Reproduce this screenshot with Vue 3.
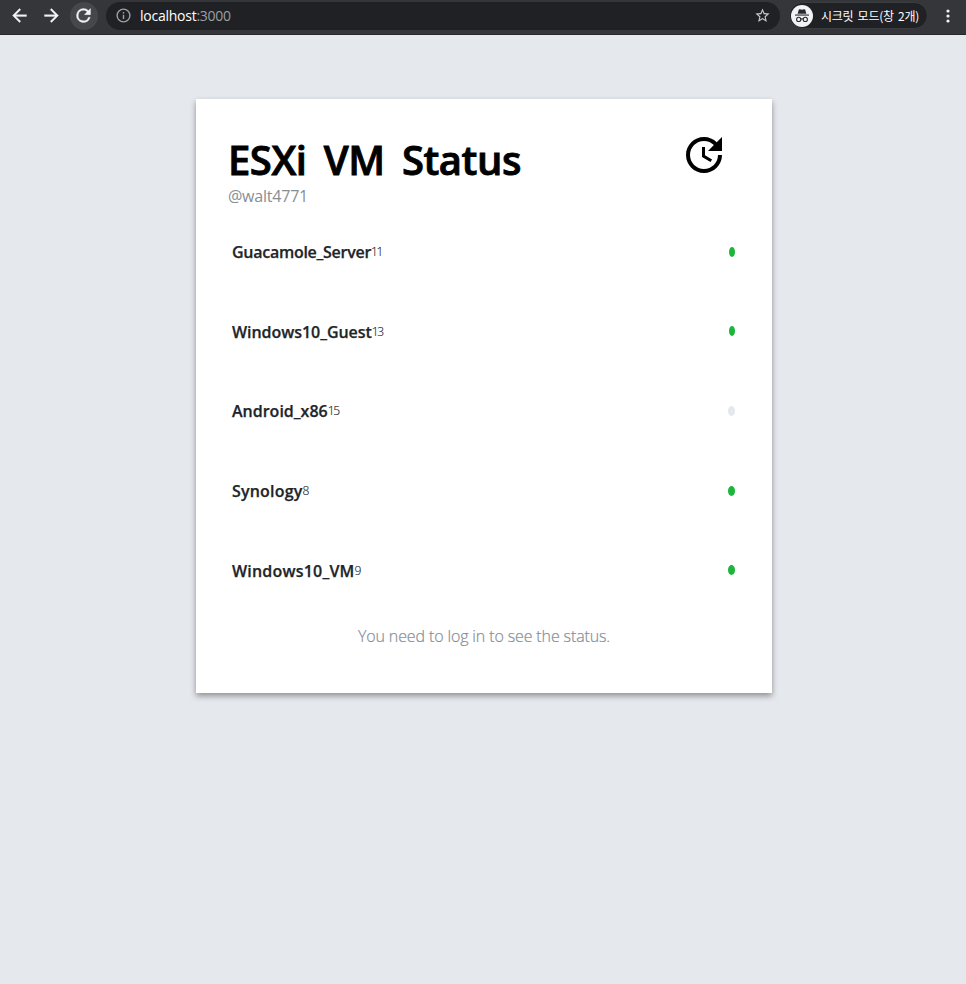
<script setup>
const machines = [
  { name: 'Guacamole_Server', id: 11, on: true, fit: 'tight' },
  { name: 'Windows10_Guest', id: 13, on: true, fit: 'snug', raised: true },
  { name: 'Android_x86', id: 15, on: false, wide: true },
  { name: 'Synology', id: 8, on: true, wide: true, fit: 'loose' },
  { name: 'Windows10_VM', id: 9, on: true, wide: true, fit: 'loose', raised: true },
]
</script>

<template>
  <div class="window">
    <header class="toolbar">
      <span class="nav back">
        <svg viewBox="0 0 24 24" width="21" height="21"><path d="M20 11H7.83l5.59-5.59L12 4l-8 8 8 8 1.41-1.41L7.83 13H20v-2z" /></svg>
      </span>
      <span class="nav forward">
        <svg viewBox="0 0 24 24" width="21" height="21"><path d="M12 4l-1.41 1.41L16.17 11H4v2h12.17l-5.58 5.59L12 20l8-8z" /></svg>
      </span>
      <span class="nav reload">
        <svg viewBox="0 0 24 24" width="21" height="21"><path d="M17.65 6.35A7.96 7.96 0 0 0 12 4a8 8 0 1 0 7.73 10h-2.08A6 6 0 1 1 12 6c1.66 0 3.14.69 4.22 1.78L13 11h7V4l-2.35 2.35z" /></svg>
      </span>
      <div class="address">
        <svg class="info" viewBox="0 0 24 24" width="17" height="17"><path d="M11 7h2v2h-2zm0 4h2v6h-2zm1-9a10 10 0 1 0 0 20 10 10 0 0 0 0-20zm0 18a8 8 0 1 1 0-16 8 8 0 0 1 0 16z" /></svg>
        <span class="url">localhost<span class="port">:3000</span></span>
        <svg class="star" viewBox="0 0 24 24" width="17" height="17"><path d="M22 9.24l-7.19-.62L12 2 9.19 8.63 2 9.24l5.46 4.73L5.82 21 12 17.27 18.18 21l-1.63-7.03L22 9.24zM12 15.4l-3.76 2.27 1-4.28-3.32-2.88 4.38-.38L12 6.1l1.71 4.04 4.38.38-3.32 2.88 1 4.28L12 15.4z" /></svg>
      </div>
      <div class="incognito">
        <svg viewBox="0 0 22 22" width="22" height="22">
          <circle cx="11" cy="11" r="11" fill="#f1f3f4" />
          <path d="M6.6 8.7 7.8 4.8Q8.1 4 9 4.3L11 4.8 13 4.3Q13.9 4 14.2 4.8L15.4 8.7Z" fill="#292a2d" />
          <path d="M4 9.5H18V10.6H4Z" fill="#292a2d" />
          <g fill="none" stroke="#292a2d" stroke-width="1.1">
            <circle cx="7.7" cy="14.4" r="2.1" />
            <circle cx="14.3" cy="14.4" r="2.1" />
            <path d="M9.8 14.2Q11 13.4 12.2 14.2" />
          </g>
        </svg>
        <span class="mode">시크릿 모드(창 2개)</span>
      </div>
      <svg class="more" viewBox="0 0 4 14" width="4" height="14">
        <circle cx="2" cy="2" r="1.6" /><circle cx="2" cy="7" r="1.6" /><circle cx="2" cy="12" r="1.6" />
      </svg>
    </header>

    <main class="card">
      <div class="head">
        <div>
          <h1>ESXi VM Status</h1>
          <p class="handle">@walt4771</p>
        </div>
        <svg class="update" viewBox="0 0 24 24" width="48" height="48"><path d="M11 8v5l4.25 2.52.77-1.28-3.52-2.09V8zm10 2V3l-2.64 2.64C16.74 4.01 14.49 3 12 3c-4.97 0-9 4.03-9 9s4.03 9 9 9 9-4.03 9-9h-2c0 3.86-3.14 7-7 7s-7-3.14-7-7 3.14-7 7-7c1.93 0 3.68.79 4.95 2.05L14 10h7z" /></svg>
      </div>
      <ul class="list">
        <li v-for="m in machines" :key="m.id" class="row">
          <span class="name" :class="m.fit">{{ m.name }}</span><span class="id">{{ m.id }}</span>
          <span class="dot" :class="{ on: m.on, wide: m.wide, raised: m.raised }"></span>
        </li>
      </ul>
      <p class="note">You need to log in to see the status.</p>
    </main>
  </div>
</template>

<style>
body {
  background: #e5e8ed;
}
</style>

<style scoped>
.window {
  box-sizing: border-box;
  height: 984px;
  background: #e5e8ed;
  font-family: "Open Sans", "Noto Sans", "Noto Sans CJK KR", sans-serif;
  overflow: hidden;
}
.toolbar {
  box-sizing: border-box;
  height: 35px;
  padding: 0 0 3px 6px;
  display: flex;
  align-items: center;
  background: #35363a;
  border-bottom: 1px solid #282828;
}
.nav {
  width: 28px;
  height: 28px;
  margin-right: 4px;
  border-radius: 50%;
  display: flex;
  align-items: center;
  justify-content: center;
  fill: #f1f3f4;
}
.nav svg {
  margin-right: 1px;
}
.nav path {
  stroke: #f1f3f4;
  stroke-width: 0.4;
}
.reload {
  background: #46474b;
  margin-right: 8px;
}
.address {
  box-sizing: border-box;
  width: 674px;
  height: 28px;
  padding: 0 9px;
  border-radius: 14px;
  display: flex;
  align-items: center;
  background: #202124;
}
.info {
  fill: #9aa0a6;
}
.url {
  flex: 1;
  margin-left: 8px;
  font-size: 14px;
  line-height: 20px;
  letter-spacing: -0.25px;
  color: #fff;
}
.port {
  color: #9aa0a6;
}
.star {
  fill: #c6c8cb;
}
.incognito {
  box-sizing: border-box;
  width: 139px;
  height: 27px;
  margin-left: 9px;
  padding-left: 1px;
  border: 1px solid #3c3d41;
  border-radius: 14px;
  display: flex;
  align-items: center;
  background: #202124;
}
.mode {
  margin-left: 8px;
  font-family: "Noto Sans CJK KR", sans-serif;
  font-size: 12px;
  line-height: 18px;
  letter-spacing: -0.25px;
  word-spacing: 1.8px;
  white-space: nowrap;
  color: #fff;
}
.more {
  margin-left: 18px;
  fill: #f1f3f4;
}
.card {
  box-sizing: border-box;
  width: 576px;
  height: 594px;
  margin: 64px 0 0 196px;
  padding: 32px;
  background: #fff;
  box-shadow: 0 3px 6px rgba(0, 0, 0, 0.38);
}
.head {
  height: 82px;
  display: flex;
  justify-content: space-between;
  padding-right: 12px;
}
h1 {
  margin: 0;
  padding-top: 4px;
  font-size: 40px;
  line-height: 50px;
  font-weight: 600;
  letter-spacing: -0.45px;
  word-spacing: 7.3px;
  -webkit-text-stroke: 0.9px #000;
  white-space: nowrap;
  color: #000;
}
.handle {
  margin: 0;
  padding-top: 1px;
  font-size: 16px;
  line-height: 20px;
  letter-spacing: -0.22px;
  color: #868e96;
}
.list {
  margin: 0;
  padding: 0;
  list-style: none;
}
.row {
  height: 79.7px;
  padding: 0 5px 0 4px;
  display: flex;
  align-items: flex-start;
}
.name {
  font-size: 16px;
  line-height: 78px;
  font-weight: 600;
  -webkit-text-stroke: 0.25px #212529;
  color: #212529;
}
.tight {
  letter-spacing: -0.27px;
}
.snug {
  letter-spacing: -0.05px;
}
.loose {
  letter-spacing: 0.2px;
}
.id {
  font-size: 12px;
  font-weight: 300;
  line-height: 78px;
  letter-spacing: -1.4px;
  -webkit-text-stroke: 0.15px #212529;
  color: #212529;
}
.dot {
  width: 6px;
  height: 10px;
  margin: 34px 0 0 auto;
  border-radius: 50%;
  background: #e5e8ed;
}
.dot.wide {
  width: 7px;
}
.dot.raised {
  margin-top: 33px;
}
.dot.on {
  background: #1db53c;
}
.note {
  margin: 0;
  padding-top: 13px;
  text-align: center;
  font-size: 16px;
  line-height: 24px;
  font-weight: 300;
  letter-spacing: -0.13px;
  -webkit-text-stroke: 0.2px #868e96;
  color: #868e96;
}
</style>
